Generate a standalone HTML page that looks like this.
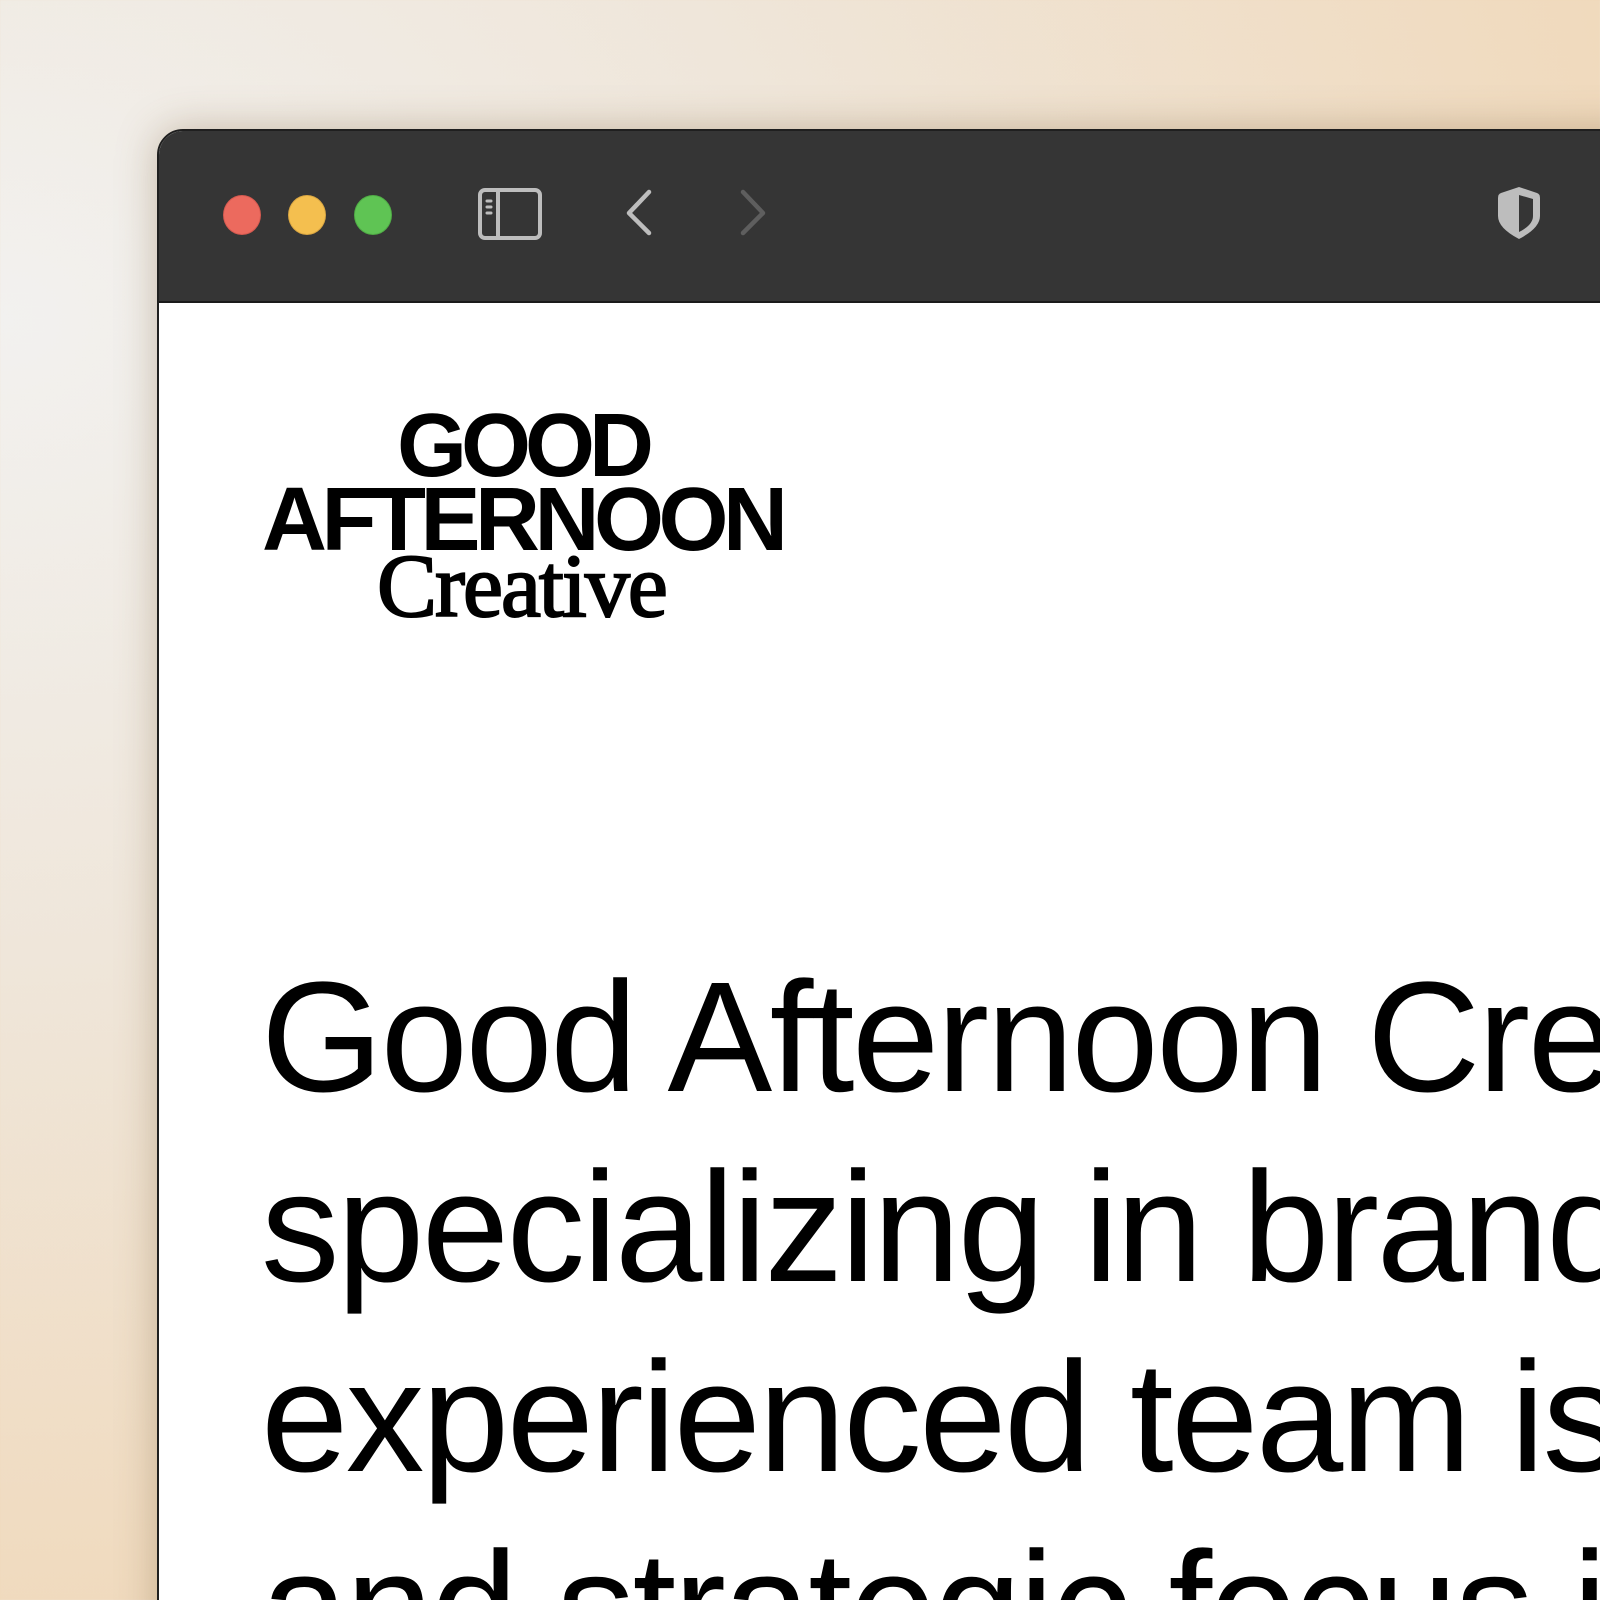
<!DOCTYPE html>
<html><head><meta charset="utf-8"><style>
html,body{margin:0;padding:0;width:1600px;height:1600px;overflow:hidden}
body{background:radial-gradient(ellipse at 0% 20%,#f2f1ef 0%,#efe6da 35%,#f0d9bb 75%,#efd2ab 100%);position:relative;font-family:"Liberation Sans",sans-serif}
.win{position:absolute;left:157px;top:129px;width:1500px;height:1520px;border-radius:26px 0 0 0;background:#fff;border:2px solid #1f1f1f;box-shadow:0 0 40px rgba(120,90,50,.35);overflow:hidden}
.bar{position:absolute;left:0;top:0;right:0;height:170px;background:#353535;border-bottom:2px solid #1a1a1a}
.dot{position:absolute;top:64px;width:38px;height:40px;border-radius:50%}
.t{position:absolute;white-space:nowrap;color:#000;line-height:1}
</style></head><body>
<div class="win">
 <div class="bar">
  <div class="dot" style="left:64px;background:#ec6a5e;border:1px solid #d65a50;box-sizing:border-box"></div>
  <div class="dot" style="left:129px;background:#f4bf4f;border:1px solid #dba742;box-sizing:border-box"></div>
  <div class="dot" style="left:195px;background:#5fc454;border:1px solid #50ad46;box-sizing:border-box"></div>
  <svg style="position:absolute;left:318px;top:56px" width="68" height="56" viewBox="0 0 68 56"><rect x="3" y="3" width="60" height="48" rx="5" fill="none" stroke="#bdbdbd" stroke-width="4"/><line x1="21" y1="3" x2="21" y2="51" stroke="#bdbdbd" stroke-width="4"/><g stroke="#bdbdbd" stroke-width="3" stroke-linecap="round"><line x1="10" y1="14" x2="14" y2="14"/><line x1="10" y1="20" x2="14" y2="20"/><line x1="10" y1="26" x2="14" y2="26"/></g></svg>
  <svg style="position:absolute;left:460px;top:56px" width="40" height="50" viewBox="0 0 40 50"><path d="M30 5 L10 26 L30 46" fill="none" stroke="#bdbdbd" stroke-width="4.5" stroke-linecap="round" stroke-linejoin="round"/></svg>
  <svg style="position:absolute;left:574px;top:56px" width="40" height="50" viewBox="0 0 40 50"><path d="M10 5 L30 26 L10 46" fill="none" stroke="#5e5e5e" stroke-width="4.5" stroke-linecap="round" stroke-linejoin="round"/></svg>
  <svg style="position:absolute;left:1334px;top:52px" width="52" height="60" viewBox="0 0 52 60"><path d="M26 4 L44 10 Q47 11 47 15 L47 33 Q47 45 26 56 Q5 45 5 33 L5 15 Q5 11 8 10 Z" fill="#bdbdbd"/><path d="M26 12 L40 16 L40 33 Q40 42 26 49 Z" fill="#353535"/></svg>
 </div>
 <div class="t" style="left:238px;top:270px;font-weight:bold;font-size:90px;letter-spacing:-6px">GOOD</div>
 <div class="t" style="left:103px;top:344px;font-weight:bold;font-size:90px;letter-spacing:-5.5px">AFTERNOON</div>
 <div class="t" style="left:218px;top:411px;font-family:'Liberation Serif',serif;font-size:90px;letter-spacing:-2px;-webkit-text-stroke:2px #000">Creative</div>
 <div class="t" style="left:102px;top:812px;font-size:157px;letter-spacing:-2.5px;line-height:190px">Good Afternoon Creative<br>specializing in branding<br>experienced team is<br>and strategic focus in</div>
</div>
</body></html>
